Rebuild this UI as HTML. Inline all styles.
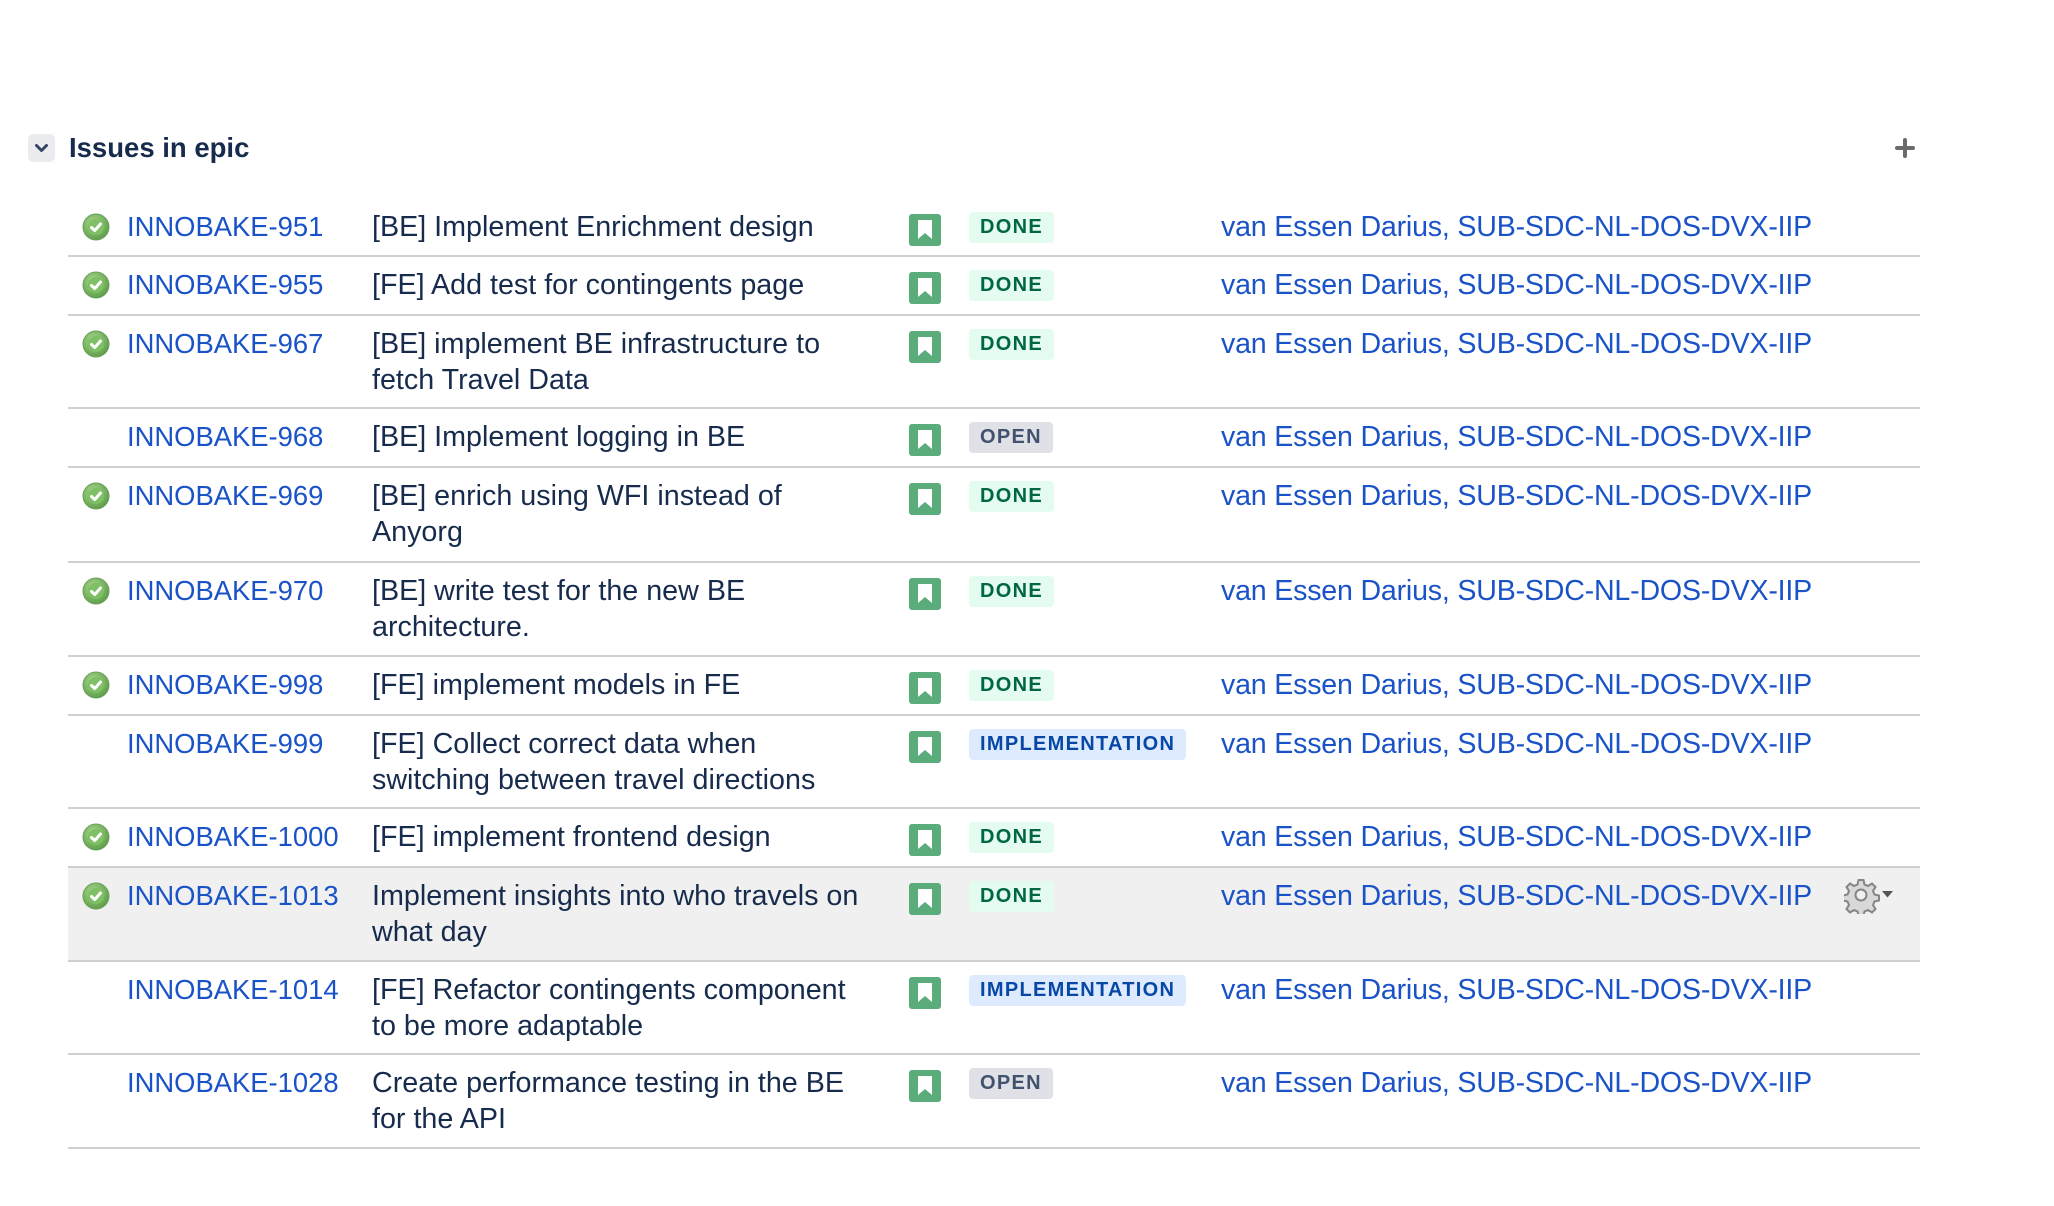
<!DOCTYPE html>
<html><head><meta charset="utf-8"><style>
*{box-sizing:border-box;margin:0;padding:0}
body{width:2054px;height:1206px;background:#fff;font-family:"Liberation Sans",Arial,sans-serif;color:#172b4d;position:relative;overflow:hidden}
.chev{position:absolute;left:28px;top:134px;width:27px;height:28px;background:#ebecf0;border-radius:5px}
.h{position:absolute;left:69px;top:131px;font-size:27.5px;font-weight:bold;line-height:34px;color:#172b4d}
.plus{position:absolute;left:1895px;top:138px}
.row{position:absolute;left:68px;width:1852px;border-bottom:2px solid #cfcfcf}
.row>*{position:absolute}
.chk{left:14px;top:14px;width:28px;height:28px}
.key{left:59px;top:10px;font-size:27.4px;line-height:36px;color:#1a52c8;white-space:nowrap}
.sum{left:304px;top:10px;font-size:28.7px;line-height:36px;white-space:nowrap;color:#172b4d}
.type{left:841px;top:15px;width:32px;height:32px}
.loz{left:901px;top:13px;height:31px;line-height:31px;border-radius:4px;font-size:20px;font-weight:bold;letter-spacing:1.3px;padding:0 11px}
.done{background:#e3fcef;color:#006644}
.open{background:#dfe1e6;color:#42526e}
.impl{background:#deebff;color:#0747a6}
.asg{left:1153px;top:10px;font-size:28.6px;line-height:36px;color:#1a52c8;white-space:nowrap;letter-spacing:-0.2px}
.gear{left:1776px;top:10px}
</style></head><body>
<div class="chev"><svg width="27" height="28" viewBox="0 0 27 28"><path d="M8.5 11.5 L13.5 16.5 L18.5 11.5" fill="none" stroke="#344563" stroke-width="3" stroke-linecap="round" stroke-linejoin="round"/></svg></div>
<div class="h">Issues in epic</div>
<svg class="plus" width="20" height="20" viewBox="0 0 20 20"><path d="M10 2V18M2 10H18" stroke="#6b6b6b" stroke-width="4" stroke-linecap="round"/></svg>

<svg width="0" height="0" style="position:absolute"><defs>
<radialGradient id="g" cx="40%" cy="35%" r="70%"><stop offset="0" stop-color="#a6d88c"/><stop offset="1" stop-color="#5a9b45"/></radialGradient>
<symbol id="ck" viewBox="0 0 28 28"><circle cx="14" cy="14" r="13" fill="url(#g)" stroke="#6c9e58" stroke-width="1"/><circle cx="14" cy="14" r="8" fill="#7fbf65"/><path d="M9.5 14.5 L12.8 17.5 L18.5 11" fill="none" stroke="#fff" stroke-width="3" stroke-linecap="round" stroke-linejoin="round"/></symbol>
<symbol id="st" viewBox="0 0 32 32"><rect width="32" height="32" rx="3" fill="#5aac7b"/><path d="M9 6H23V25L16 19L9 25Z" fill="#fff"/></symbol>
</defs></svg>

<div class="row" style="top:199px;height:58px"><svg class="chk"><use href="#ck"/></svg><div class="key">INNOBAKE-951</div><div class="sum">[BE] Implement Enrichment design</div><svg class="type"><use href="#st"/></svg><div class="loz done">DONE</div><div class="asg">van Essen Darius, SUB-SDC-NL-DOS-DVX-IIP</div></div>
<div class="row" style="top:257px;height:59px"><svg class="chk"><use href="#ck"/></svg><div class="key">INNOBAKE-955</div><div class="sum">[FE] Add test for contingents page</div><svg class="type"><use href="#st"/></svg><div class="loz done">DONE</div><div class="asg">van Essen Darius, SUB-SDC-NL-DOS-DVX-IIP</div></div>
<div class="row" style="top:316px;height:93px"><svg class="chk"><use href="#ck"/></svg><div class="key">INNOBAKE-967</div><div class="sum">[BE] implement BE infrastructure to<br>fetch Travel Data</div><svg class="type"><use href="#st"/></svg><div class="loz done">DONE</div><div class="asg">van Essen Darius, SUB-SDC-NL-DOS-DVX-IIP</div></div>
<div class="row" style="top:409px;height:59px"><div class="key">INNOBAKE-968</div><div class="sum">[BE] Implement logging in BE</div><svg class="type"><use href="#st"/></svg><div class="loz open">OPEN</div><div class="asg">van Essen Darius, SUB-SDC-NL-DOS-DVX-IIP</div></div>
<div class="row" style="top:468px;height:95px"><svg class="chk"><use href="#ck"/></svg><div class="key">INNOBAKE-969</div><div class="sum">[BE] enrich using WFI instead of<br>Anyorg</div><svg class="type"><use href="#st"/></svg><div class="loz done">DONE</div><div class="asg">van Essen Darius, SUB-SDC-NL-DOS-DVX-IIP</div></div>
<div class="row" style="top:563px;height:94px"><svg class="chk"><use href="#ck"/></svg><div class="key">INNOBAKE-970</div><div class="sum">[BE] write test for the new BE<br>architecture.</div><svg class="type"><use href="#st"/></svg><div class="loz done">DONE</div><div class="asg">van Essen Darius, SUB-SDC-NL-DOS-DVX-IIP</div></div>
<div class="row" style="top:657px;height:59px"><svg class="chk"><use href="#ck"/></svg><div class="key">INNOBAKE-998</div><div class="sum">[FE] implement models in FE</div><svg class="type"><use href="#st"/></svg><div class="loz done">DONE</div><div class="asg">van Essen Darius, SUB-SDC-NL-DOS-DVX-IIP</div></div>
<div class="row" style="top:716px;height:93px"><div class="key">INNOBAKE-999</div><div class="sum">[FE] Collect correct data when<br>switching between travel directions</div><svg class="type"><use href="#st"/></svg><div class="loz impl">IMPLEMENTATION</div><div class="asg">van Essen Darius, SUB-SDC-NL-DOS-DVX-IIP</div></div>
<div class="row" style="top:809px;height:59px"><svg class="chk"><use href="#ck"/></svg><div class="key">INNOBAKE-1000</div><div class="sum">[FE] implement frontend design</div><svg class="type"><use href="#st"/></svg><div class="loz done">DONE</div><div class="asg">van Essen Darius, SUB-SDC-NL-DOS-DVX-IIP</div></div>
<div class="row" style="top:868px;height:94px;background:#f0f0f0"><svg class="chk"><use href="#ck"/></svg><div class="key">INNOBAKE-1013</div><div class="sum">Implement insights into who travels on<br>what day</div><svg class="type"><use href="#st"/></svg><div class="loz done">DONE</div><div class="asg">van Essen Darius, SUB-SDC-NL-DOS-DVX-IIP</div>
<svg class="gear" width="56" height="36" viewBox="0 0 56 36"><g transform="translate(17 17)"><path d="M-2.5-15h5l1 4.5 3.5 1.5 4-2.5 3.5 3.5-2.5 4 1.5 3.5 4.5 1v5l-4.5 1-1.5 3.5 2.5 4-3.5 3.5-4-2.5-3.5 1.5-1 4.5h-5l-1-4.5-3.5-1.5-4 2.5-3.5-3.5 2.5-4-1.5-3.5-4.5-1v-5l4.5-1 1.5-3.5-2.5-4 3.5-3.5 4 2.5 3.5-1.5z" fill="#d8d8d8" stroke="#858585" stroke-width="2"/><circle r="5.5" fill="#f0f0f0" stroke="#858585" stroke-width="2"/></g><path d="M38 13H49L43.5 19.5Z" fill="#555"/></svg></div>
<div class="row" style="top:962px;height:93px"><div class="key">INNOBAKE-1014</div><div class="sum">[FE] Refactor contingents component<br>to be more adaptable</div><svg class="type"><use href="#st"/></svg><div class="loz impl">IMPLEMENTATION</div><div class="asg">van Essen Darius, SUB-SDC-NL-DOS-DVX-IIP</div></div>
<div class="row" style="top:1055px;height:94px"><div class="key">INNOBAKE-1028</div><div class="sum">Create performance testing in the BE<br>for the API</div><svg class="type"><use href="#st"/></svg><div class="loz open">OPEN</div><div class="asg">van Essen Darius, SUB-SDC-NL-DOS-DVX-IIP</div></div>
</body></html>
